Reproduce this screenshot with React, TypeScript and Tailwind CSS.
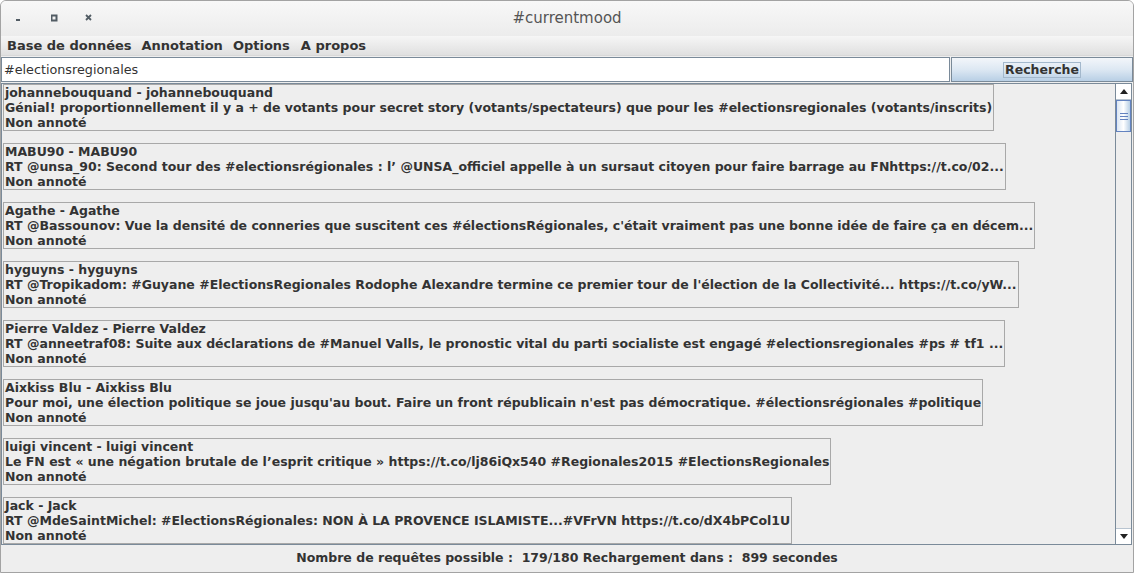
import React from "react";

const tweets = [
  {
    name: "johannebouquand - johannebouquand",
    text: "Génial! proportionnellement il y a + de votants pour secret story (votants/spectateurs) que pour les #electionsregionales (votants/inscrits)",
  },
  {
    name: "MABU90 - MABU90",
    text: "RT @unsa_90: Second tour des #electionsrégionales : l’ @UNSA_officiel appelle à un sursaut citoyen pour faire barrage au FNhttps://t.co/02...",
  },
  {
    name: "Agathe - Agathe",
    text: "RT @Bassounov: Vue la densité de conneries que suscitent ces #électionsRégionales, c'était vraiment pas une bonne idée de faire ça en décem...",
  },
  {
    name: "hyguyns - hyguyns",
    text: "RT @Tropikadom: #Guyane #ElectionsRegionales Rodophe Alexandre termine ce premier tour de l'élection de la Collectivité... https://t.co/yW...",
  },
  {
    name: "Pierre Valdez - Pierre Valdez",
    text: "RT @anneetraf08: Suite aux déclarations de #Manuel Valls, le pronostic vital du parti socialiste est engagé #electionsregionales #ps # tf1 ...",
  },
  {
    name: "Aixkiss Blu - Aixkiss Blu",
    text: "Pour moi, une élection politique se joue jusqu'au bout. Faire un front républicain n'est pas démocratique. #électionsrégionales #politique",
  },
  {
    name: "luigi vincent - luigi vincent",
    text: "Le FN est « une négation brutale de l’esprit critique » https://t.co/lj86iQx540 #Regionales2015 #ElectionsRegionales",
  },
  {
    name: "Jack - Jack",
    text: "RT @MdeSaintMichel: #ElectionsRégionales: NON À LA PROVENCE ISLAMISTE...#VFrVN https://t.co/dX4bPCol1U",
  },
];

const font = { fontFamily: '"DejaVu Sans", "Liberation Sans", sans-serif' };

export default function App() {
  return (
    <div
      className="w-[1134px] h-[573px] flex flex-col bg-[#eeeeee] text-[#333333] overflow-hidden border border-[#a3a3a3] rounded-t-[6px]"
      style={font}
    >
      {/* Title bar */}
      <div className="h-[35px] shrink-0 flex items-center relative bg-gradient-to-b from-[#f8f8f8] to-[#ececec]">
        <div className="flex items-center pl-[15px] gap-0">
          <svg width="36" height="12" viewBox="0 0 36 12">
            <rect x="0" y="6" width="4" height="2" fill="#525c64" />
          </svg>
          <svg width="34" height="12" viewBox="0 0 34 12" className="-ml-[1px]">
            <rect x="0.5" y="2.5" width="5" height="5" fill="none" stroke="#525c64" strokeWidth="2" />
          </svg>
          <svg width="12" height="12" viewBox="0 0 12 12">
            <path d="M1 2 L6 7 M6 2 L1 7" stroke="#525c64" strokeWidth="1.8" />
          </svg>
        </div>
        <div className="absolute inset-0 flex items-center justify-center pointer-events-none">
          <span className="text-[15px] text-[#555555] pl-[0px]">#currentmood</span>
        </div>
      </div>

      {/* Menu bar */}
      <div className="h-[20px] shrink-0 flex items-center gap-[11px] pl-[6px] text-[13px] font-bold text-[#333333] bg-gradient-to-b from-[#f6f6f6] to-[#e0e0e0] border-b border-[#d8d8d8]">
        <span>Base de données</span>
        <span className="-ml-[1px]">Annotation</span>
        <span className="-ml-[1px]">Options</span>
        <span>A propos</span>
      </div>

      {/* Search row */}
      <div className="h-[25px] shrink-0 flex mt-[1px] gap-[1px] pr-[0px]">
        <div className="w-[949px] h-[25px] bg-white border border-[#7a8a99] flex items-center pl-[2px] text-[12.75px] text-[#333333]">
          #electionsregionales
        </div>
        <div className="flex-1 h-[25px] border border-[#7a8a99] bg-gradient-to-b from-[#f3f6fa] via-[#dde8f3] to-[#b8cfe5] flex items-center justify-center">
          <span className="border border-[#a3b8cc] px-[1px] text-[12.5px] font-bold leading-[14px] text-[#333333]">
            Recherche
          </span>
        </div>
      </div>

      {/* List */}
      <div className="flex-1 min-h-0 flex border border-[#7a8a99] mt-[1px] mr-[1px]">
        <div className="flex-1 min-w-0 flex flex-col gap-[12px] pl-[1px] pt-[0px] overflow-hidden">
          {tweets.map((t, i) => (
            <div
              key={i}
              className="w-fit shrink-0 border border-[#a8a8a8] pl-[1px] pr-[1px] h-[47px] text-[12.5px] font-bold leading-[15px] text-[#333333] whitespace-nowrap"
            >
              <div>{t.name}</div>
              <div>{t.text}</div>
              <div>Non annoté</div>
            </div>
          ))}
        </div>
        {/* Scrollbar */}
        <div className="w-[16px] shrink-0 flex flex-col border-l border-[#7a8a99] bg-[#eeeeee]">
          <div className="h-[16px] shrink-0 bg-white border-b border-[#b8c4d0] flex items-center justify-center">
            <svg width="8" height="5" viewBox="0 0 8 5">
              <path d="M0 5 L4 0 L8 5 Z" fill="#222" />
            </svg>
          </div>
          <div className="h-[32px] shrink-0 border border-[#6382bf] bg-gradient-to-r from-[#dbe6f3] via-[#ffffff] to-[#b8cfe5] flex flex-col items-center justify-center gap-[2px]">
            <div className="w-[8px] h-[1px] bg-[#6382bf]" />
            <div className="w-[8px] h-[1px] bg-[#6382bf]" />
            <div className="w-[8px] h-[1px] bg-[#6382bf]" />
          </div>
          <div className="flex-1" />
          <div className="h-[16px] shrink-0 bg-white border-t border-[#b8c4d0] flex items-center justify-center">
            <svg width="8" height="5" viewBox="0 0 8 5">
              <path d="M0 0 L8 0 L4 5 Z" fill="#222" />
            </svg>
          </div>
        </div>
      </div>

      {/* Status bar */}
      <div className="h-[27px] shrink-0 flex items-center justify-center text-[12.5px] font-bold text-[#333333] whitespace-pre">
        {"Nombre de requêtes possible :  179/180 Rechargement dans :  899 secondes"}
      </div>
    </div>
  );
}
